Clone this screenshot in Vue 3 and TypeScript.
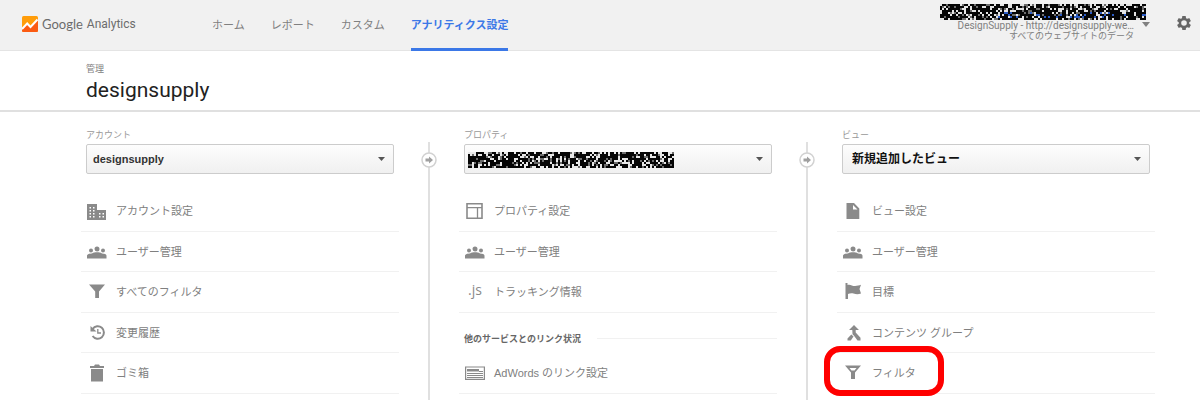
<script setup lang="ts">
interface Item {
  icon: string
  label: string
  marked?: boolean
}
interface Column {
  id: string
  label: string
  selected: string
  masked?: boolean
  items: Item[]
  section?: { title: string; items: Item[] }
}

const nav = [
  { label: 'ホーム', active: false },
  { label: 'レポート', active: false },
  { label: 'カスタム', active: false },
  { label: 'アナリティクス設定', active: true },
]

const columns: Column[] = [
  {
    id: 'account',
    label: 'アカウント',
    selected: 'designsupply',
    items: [
      { icon: 'building', label: 'アカウント設定' },
      { icon: 'people', label: 'ユーザー管理' },
      { icon: 'funnel', label: 'すべてのフィルタ' },
      { icon: 'history', label: '変更履歴' },
      { icon: 'trash', label: 'ゴミ箱' },
    ],
  },
  {
    id: 'property',
    label: 'プロパティ',
    selected: '',
    masked: true,
    items: [
      { icon: 'layout', label: 'プロパティ設定' },
      { icon: 'people', label: 'ユーザー管理' },
      { icon: 'js', label: 'トラッキング情報' },
    ],
    section: {
      title: '他のサービスとのリンク状況',
      items: [{ icon: 'adwords', label: 'AdWords のリンク設定' }],
    },
  },
  {
    id: 'view',
    label: 'ビュー',
    selected: '新規追加したビュー',
    items: [
      { icon: 'page', label: 'ビュー設定' },
      { icon: 'people', label: 'ユーザー管理' },
      { icon: 'flag', label: '目標' },
      { icon: 'merge', label: 'コンテンツ グループ' },
      { icon: 'funnelOpen', label: 'フィルタ', marked: true },
    ],
  },
]

const icons: Record<string, string> = {
  building:
    'M0 3H10V9H19V19H0ZM2.5 6v1.5H4V6ZM6 6v1.5h1.5V6ZM2.5 9v1.5H4V9ZM6 9v1.5h1.5V9ZM2.5 12v1.5H4V12ZM6 12v1.5h1.5V12ZM2.5 15v1.5H4V15ZM6 15v1.5h1.5V15ZM12 12v1.5h1.5V12ZM15.5 12v1.5H17V12ZM12 15v1.5h1.5V15ZM15.5 15v1.5H17V15Z',
  people:
    'M10 4.5a2.5 2.5 0 1 1 0 5a2.5 2.5 0 0 1 0-5ZM4 6.500a2 2 0 1 1 0 4a2 2 0 0 1 0-4ZM16 6.500a2 2 0 1 1 0 4a2 2 0 0 1 0-4ZM0 16.500V14C0 12 2.500 11.400 5 11.400C6.500 10.400 8 10.300 10 10.300S13.500 10.400 15 11.400C17.500 11.400 19.500 12 19.500 14V16.500Z',
  funnel: 'M2 2.500H18L12 9.500V16H8.200V9.500Z',
  trash: 'M3 3H7L8 1.500H12L13 3H17V5H3ZM4 6H16V18.500H4Z',
  page: 'M3.500 2H11L16.300 7.500V18H3.500ZM10 4V8.500H14.500Z',
  flag: 'M2.500 1H4.500V3C7 1.800 9 4 12 4C14.500 4 16 3.300 18 2.800L16.500 7L18 11.500C15 12.500 13 12.200 10.500 11.500C8 10.900 6.500 11.500 5 12V17H2.500Z',
  merge:
    'M11 2L16 7H12.700V9.500L17.500 14.800V17.500H14.500L11 12.800L9.500 11.200L9.300 7H6ZM8.300 11.500L10.500 13.600L7.800 17.500H4.500V15.500Z',
  funnelOpen: 'M2 2.500H18L12 9.500V16H8V9.500ZM6.500 5L8.500 7.500H11.500L13.500 5Z',
}

/* Mosaic that hides an identifier: seeded so every render gives the same blocks. */
function mosaic(seed: number, withBlue: boolean) {
  let state = seed
  const next = () => {
    state = (state * 1664525 + 1013904223) % 4294967296
    return state / 4294967296
  }
  const out = { light: '', mid: '', blue: '' }
  for (let y = 0; y < 8; y++) {
    for (let x = 0; x < 103; x++) {
      const value = next()
      const cell = `M${x * 2} ${y * 2}h2v2h-2z`
      if (value < 0.28) {
        if (withBlue && y > 3 && y < 7 && x > 28 && next() < 0.5) out.blue += cell
        else out.light += cell
      } else if (value < 0.4) out.mid += cell
    }
  }
  return out
}
const headerMosaic = mosaic(71, true)
const propertyMosaic = mosaic(2203, false)
</script>

<template>
  <div class="page">
    <header class="topbar">
      <a class="brand" href="#">
        <svg class="brand-mark" viewBox="0 0 16 16" aria-hidden="true">
          <path d="M1.500 0H14.500Q16 0 16 1.500V14.500Q16 16 14.500 16H1.500Q0 16 0 14.500V1.500Q0 0 1.500 0Z" fill="#ff9d0a" />
          <path d="M0 13L5 7.500L9 11L16 3V14.500Q16 16 14.500 16H1.500Q0 16 0 14.500Z" fill="#fb5b13" />
          <path d="M0 13L5.200 7.500L8.500 11L15.500 3.500" fill="none" stroke="#fff" stroke-width="2" />
        </svg>
        <span class="brand-google">Google</span>
        <span class="brand-product">Analytics</span>
      </a>
      <nav class="nav">
        <a v-for="n in nav" :key="n.label" href="#" :class="{ active: n.active }">{{ n.label }}</a>
      </nav>
      <button class="profile" type="button">
        <span class="profile-text">
          <svg class="mosaic" viewBox="0 0 206 16" aria-hidden="true">
            <rect width="206" height="16" fill="#050505" />
            <path :d="headerMosaic.light" fill="#e4e4e4" />
            <path :d="headerMosaic.mid" fill="#6d6d6d" />
            <path :d="headerMosaic.blue" fill="#2c5cc5" />
          </svg>
          <span class="profile-name">DesignSupply - http://designsupply-we…</span>
          <span class="profile-view">すべてのウェブサイトのデータ</span>
        </span>
        <svg class="profile-arrow" viewBox="0 0 8 5" aria-hidden="true"><path d="M0 0H8L4 5Z" /></svg>
      </button>
      <button class="gear" type="button" aria-label="設定">
        <svg viewBox="2 2 20 20" aria-hidden="true">
          <path
            fill-rule="evenodd"
            d="M19.430 12.980c.04-.32.070-.64.070-.98s-.03-.66-.07-.98l2.110-1.650c.19-.15.240-.42.120-.64l-2-3.460c-.12-.22-.39-.3-.61-.22l-2.490 1c-.52-.4-1.080-.73-1.690-.98l-.38-2.650C14.460 2.180 14.250 2 14 2h-4c-.25 0-.46.180-.49.420l-.38 2.650c-.61.250-1.170.590-1.690.980l-2.490-1c-.23-.09-.49 0-.61.220l-2 3.460c-.13.220-.07.490.120.640l2.110 1.650c-.04.320-.07.650-.07.980s.03.660.070.980l-2.110 1.650c-.19.150-.24.420-.12.640l2 3.460c.12.220.39.300.61.220l2.490-1c.52.400 1.080.730 1.690.980l.38 2.650c.03.240.24.420.49.420h4c.25 0 .46-.18.490-.42l.38-2.650c.61-.25 1.170-.59 1.690-.98l2.490 1c.23.090.49 0 .61-.22l2-3.460c.12-.22.070-.49-.12-.64l-2.110-1.650zM12 16a4 4 0 1 1 0-8a4 4 0 0 1 0 8z"
          />
        </svg>
      </button>
    </header>

    <section class="heading">
      <p>管理</p>
      <h1>designsupply</h1>
    </section>

    <main class="columns">
      <template v-for="(col, index) in columns" :key="col.id">
        <div v-if="index > 0" class="divider">
          <svg viewBox="0 0 16 16" aria-hidden="true">
            <circle cx="8" cy="8" r="7" fill="#fff" stroke="#d2d2d2" stroke-width="1.500" />
            <path d="M4.500 6.500H8V4.500L12 8L8 11.500V9.500H4.500Z" fill="#a0a0a0" />
          </svg>
        </div>
        <section class="column">
          <label :for="col.id">{{ col.label }}</label>
          <div class="picker">
            <select :id="col.id" :class="col.id">
              <option>{{ col.selected }}</option>
            </select>
            <svg v-if="col.masked" class="mosaic picker-mask" viewBox="0 0 206 16" aria-hidden="true">
              <rect width="206" height="16" fill="#050505" />
              <path :d="propertyMosaic.light" fill="#e8e8e8" />
              <path :d="propertyMosaic.mid" fill="#6d6d6d" />
            </svg>
            <svg class="picker-arrow" viewBox="0 0 7 4" aria-hidden="true"><path d="M0 0H7L3.500 4Z" /></svg>
          </div>
          <ul class="items">
            <template v-for="group in [col.items, col.section?.items ?? []]" :key="group.length">
              <li v-if="col.section && group === col.section.items" class="section">
                <h2>{{ col.section.title }}</h2>
              </li>
              <li v-for="item in group" :key="item.label">
                <a href="#">
                  <span v-if="item.icon === 'js'" class="icon js" aria-hidden="true">.js</span>
                  <svg v-else class="icon" viewBox="0 0 20 20" aria-hidden="true">
                    <template v-if="item.icon === 'history'">
                      <path class="line" stroke-width="2" d="M5.600 6A6.200 6.200 0 1 1 5.600 13" />
                      <path d="M3.500 3V8.500H9.500Z" />
                      <path class="line" stroke-width="1.300" d="M10.800 6V10H14" />
                    </template>
                    <template v-else-if="item.icon === 'layout'">
                      <path class="line" stroke-width="1.600" d="M2 2.800H17V17.200H2Z" />
                      <path class="line" stroke-width="1.300" d="M2 6.700H17M12.500 6.700V17" />
                    </template>
                    <template v-else-if="item.icon === 'adwords'">
                      <path class="line" stroke-width="1.200" d="M0.600 4H19.400V16.400H0.600Z" />
                      <path d="M2 6H14V8.500H2Z" />
                      <path class="line" stroke-width="1" d="M14 8.500H18M2 10.500H18M2 12.500H18M2 14.500H18" />
                    </template>
                    <path v-else fill-rule="evenodd" :d="icons[item.icon]" />
                  </svg>
                  <span class="item-label">{{ item.label }}</span>
                </a>
                <span v-if="item.marked" class="marker"></span>
              </li>
            </template>
          </ul>
        </section>
      </template>
    </main>
  </div>
</template>

<style>
body {
  background: #fff;
}
</style>

<style scoped>
.page {
  display: flex;
  flex-direction: column;
  min-height: 100vh;
  color: #808080;
  font-family: "Liberation Sans", "Noto Sans CJK JP", sans-serif;
  font-size: 11px;
}
a {
  color: inherit;
  text-decoration: none;
}
button {
  padding: 0;
  border: 0;
  background: none;
  color: inherit;
  font: inherit;
}
svg {
  display: block;
}
.topbar {
  display: flex;
  align-items: stretch;
  height: 50px;
  padding: 0 9px 0 22px;
  border-bottom: 1px solid #e4e4e4;
  background: #f1f1f1;
}
.brand {
  display: flex;
  align-items: center;
  width: 190px;
  height: 48px;
  color: #6c6c6c;
}
.brand-mark {
  width: 16px;
  height: 16px;
  margin-right: 4px;
}
.brand-google {
  margin-right: 4px;
  font-family: Lato, sans-serif;
  font-size: 13px;
}
.brand-product {
  font-family: Roboto, sans-serif;
  font-size: 12px;
}
.nav {
  display: flex;
  gap: 26px;
  height: 51px;
}
.nav a {
  box-sizing: border-box;
  height: 51px;
  border-bottom: 3px solid transparent;
  line-height: 51px;
  white-space: nowrap;
}
.nav .active {
  border-color: #3b78e7;
  color: #3b78e7;
  font-weight: bold;
}
.profile {
  display: flex;
  align-items: flex-start;
  margin-left: auto;
  padding-top: 4px;
  font-family: Roboto, "Noto Sans CJK JP", sans-serif;
  font-size: 10px;
}
.profile-text {
  display: flex;
  flex-direction: column;
  align-items: flex-end;
}
.mosaic {
  width: 206px;
  height: 16px;
}
.profile-name,
.profile-view {
  margin-right: 12px;
  line-height: 11px;
}
.profile-view {
  font-size: 9px;
}
.profile-arrow {
  width: 8px;
  height: 5px;
  margin: 18px 0 0 -4px;
  fill: #808080;
}
.gear {
  width: 14px;
  height: 46px;
  margin-left: 27px;
}
.gear svg {
  width: 14px;
  height: 14px;
  fill: #666;
}
.heading {
  padding: 11px 86px 7px;
  border-bottom: 2px solid #e0e0e0;
}
.heading p {
  margin: 0;
  font-size: 9px;
  line-height: 14px;
}
.heading h1 {
  margin: 0;
  padding-top: 1px;
  color: #222;
  font-family: Roboto, sans-serif;
  font-size: 21px;
  font-weight: normal;
  line-height: 26px;
}
.columns {
  display: grid;
  flex: 1;
  grid-template-columns: 1fr 70px 1fr 70px 1fr;
  padding: 16px 50px 0 86px;
}
.column {
  min-width: 0;
}
.column label {
  display: block;
  padding-bottom: 2px;
  color: #999;
  font-size: 9px;
  line-height: 14px;
}
.divider {
  display: flex;
  justify-content: center;
  margin-top: 14px;
  padding-top: 10px;
  background: linear-gradient(#e0e0e0, #e0e0e0) center / 2px 100% no-repeat;
}
.divider svg {
  width: 16px;
  height: 16px;
}
.picker {
  position: relative;
}
.picker select {
  display: block;
  width: 100%;
  height: 30px;
  padding: 0 24px 0 6px;
  border: 1px solid #ccc;
  border-radius: 2px;
  appearance: none;
  background: linear-gradient(#fdfdfd, #f0f0f0);
  color: #333;
  font-family: inherit;
  font-size: 11px;
  font-weight: bold;
}
.picker select.view {
  padding-left: 9px;
  color: #111;
  font-size: 12px;
}
.picker-mask {
  position: absolute;
  top: 8px;
  left: 4px;
  pointer-events: none;
}
.picker-arrow {
  position: absolute;
  top: 13px;
  right: 9px;
  width: 7px;
  height: 4px;
  fill: #555;
  pointer-events: none;
}
.items {
  margin: 17px -5px 0;
  padding: 0;
  list-style: none;
}
.items li {
  position: relative;
  box-sizing: border-box;
  height: 40px;
  border-bottom: 1px solid #f1f1f1;
}
.items li:nth-child(odd) {
  height: 41px;
}
.items a {
  display: flex;
  align-items: center;
  gap: 9px;
  height: 100%;
  padding-left: 6px;
}
.item-label {
  padding-bottom: 2px;
}
.icon {
  width: 20px;
  height: 20px;
  fill: #8a8a8a;
}
.icon .line {
  fill: none;
  stroke: #8a8a8a;
}
.icon.js {
  color: #8a8a8a;
  font-family: "Open Sans", sans-serif;
  font-size: 14px;
  line-height: 16px;
  text-align: center;
}
.items .section {
  display: flex;
  align-items: center;
  gap: 16px;
  padding: 11px 0 0 5px;
  border-bottom: 0;
}
.section::after {
  flex: 1;
  height: 1px;
  background: #f1f1f1;
  content: "";
}
.section h2 {
  margin: 0;
  color: #666;
  font-size: 9px;
  line-height: 14px;
}
.marker {
  position: absolute;
  top: -7px;
  left: -13px;
  box-sizing: border-box;
  width: 120px;
  height: 50px;
  border: 6px solid #f00;
  border-radius: 16px;
  pointer-events: none;
}
</style>
